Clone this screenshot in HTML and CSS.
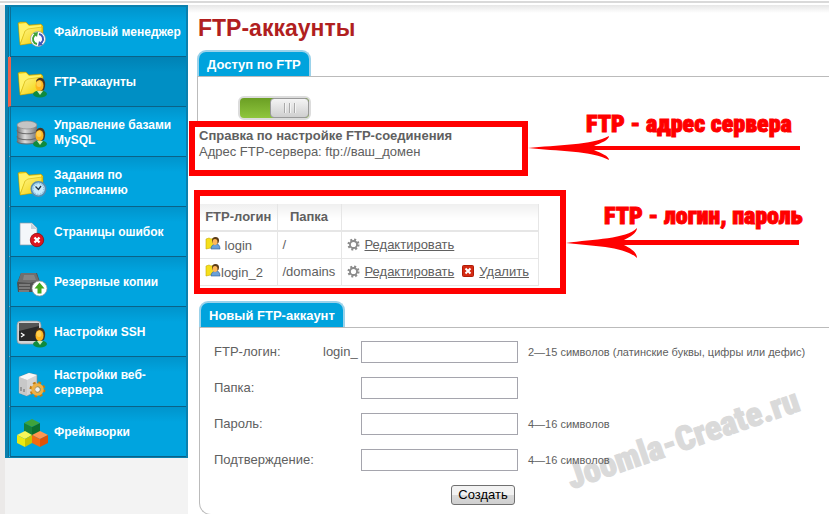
FILE: index.html
```html
<!DOCTYPE html>
<html lang="ru">

<head>
  <meta charset="utf-8">
  <title>FTP-аккаунты</title>
  <link rel="stylesheet" href="styles.css">
</head>

<body>
  <!-- shared icon parts -->
  <svg class="sprite" aria-hidden="true">
    <defs>
      <linearGradient id="yellow" x1="0" y1="0" x2="1" y2="1">
        <stop offset="0" stop-color="#fff58a" />
        <stop offset="1" stop-color="#f2cf00" />
      </linearGradient>
      <linearGradient id="metal" x1="0" y1="0" x2="1" y2="0">
        <stop offset="0" stop-color="#6f6f6f" />
        <stop offset=".4" stop-color="#dcdcdc" />
        <stop offset="1" stop-color="#777" />
      </linearGradient>
      <symbol id="folder" viewBox="0 0 32 32">
        <path d="M2 6l2-1 6 0 3 3 12-1 2 2v15L4 28z" fill="#f0d21a" stroke="#a98a00" stroke-width=".5" />
        <path d="M3 7l7-1 3 3 12-1v5L9 14 4 26z" fill="#fff36a" />
        <path d="M9 14l3-2 14-2-1 15L4 28z" fill="url(#yellow)" stroke="#c9a800" stroke-width=".5" />
      </symbol>
      <symbol id="user" viewBox="0 0 32 32">
        <ellipse cx="24" cy="27" rx="7" ry="3.500" fill="#0e8a3e" />
        <path d="M21 24l3 4 3-4z" fill="#c8ecc0" />
        <path d="M20 14c2-4 6-4 8-1 2 3 1 7 0 10l-4 1z" fill="#4a3420" />
        <ellipse cx="23.500" cy="18.500" rx="4" ry="5.500" fill="#ffb51e" />
        <ellipse cx="23" cy="17" rx="2.500" ry="3" fill="#ffcf50" />
      </symbol>
      <symbol id="smalluser" viewBox="0 0 16 16">
        <path d="M1 3l3-1 2 1 4-1v9l-9 2z" fill="#f5df1c" stroke="#c7a900" stroke-width=".6" />
        <path d="M6 13c0-3 2-5 5-5s4 2 4 5z" fill="#6aa0d8" stroke="#2e5c94" stroke-width=".6" />
        <circle cx="10.500" cy="4.500" r="3.500" fill="#5a3b18" />
        <ellipse cx="10" cy="6" rx="2.500" ry="3" fill="#ffb85a" />
      </symbol>
      <symbol id="gear" viewBox="0 0 14 14">
        <circle cx="7" cy="7" r="5" fill="none" stroke="#8c8c8c" stroke-width="3" stroke-dasharray="2 1.93" />
        <circle cx="7" cy="7" r="3.8" fill="none" stroke="#8c8c8c" stroke-width="2" />
      </symbol>
      <symbol id="remove" viewBox="0 0 12 12">
        <rect x=".5" y=".5" width="11" height="11" rx="1" fill="#d42a12" stroke="#b01c08" />
        <path d="M3.5 3.5l5 5m0-5l-5 5" stroke="#fff" stroke-width="2" />
      </symbol>
    </defs>
  </svg>

  <div class="topbar"></div>

  <div class="page">
    <aside class="sidebar">
      <nav>
        <ul class="menu">
          <li><a href="#">
            <svg viewBox="0 0 32 32"><use href="#folder" /><circle cx="22" cy="22" r="7.5" fill="#fff" stroke="#999" stroke-width=".7" /><path d="M21 27a5 5 0 0 1-3-8l2-2" fill="none" stroke="#3fa33a" stroke-width="2" /><path d="M17 16l5-1-1 5z" fill="#3fa33a" /><path d="M23 17a5 5 0 0 1 3 8l-2 2" fill="none" stroke="#3f57b8" stroke-width="2" /><path d="M27 28l-5 1 1-5z" fill="#3f57b8" /></svg>
            <span>Файловый менеджер</span></a></li>
          <li class="active"><a href="#">
            <svg viewBox="0 0 32 32"><use href="#folder" /><use href="#user" /></svg>
            <span>FTP-аккаунты</span></a></li>
          <li><a href="#">
            <svg viewBox="0 0 32 32"><path d="M1 8v15c0 5 20 5 20 0V8z" fill="url(#metal)" /><path d="M1 13c0 5 20 5 20 0M1 19c0 5 20 5 20 0M1 24c0 4 20 4 20 0" fill="none" stroke="#6d6d6d" stroke-width="1.200" /><ellipse cx="11" cy="8" rx="10" ry="4" fill="#c4c4c4" stroke="#8a8a8a" stroke-width=".7" /><use href="#user" /></svg>
            <span>Управление базами MySQL</span></a></li>
          <li><a href="#">
            <svg viewBox="0 0 32 32"><use href="#folder" /><circle cx="22.500" cy="22" r="7.200" fill="#a9d8f2" stroke="#5a8db0" stroke-width="1.600" /><circle cx="22.500" cy="22" r="5.300" fill="#c9ebfb" stroke="#7fb2d2" stroke-dasharray="1 1.770" /><path d="M19.500 19.500l3 3 2.500-3.500" fill="none" stroke="#234" stroke-width="1.300" /></svg>
            <span>Задания по расписанию</span></a></li>
          <li><a href="#">
            <svg viewBox="0 0 32 32"><path d="M4 6h12l5 5v17H4z" fill="#f4f7fa" stroke="#8a9aa8" stroke-width=".7" /><path d="M15 6v6h6z" fill="#c5d2dc" /><circle cx="21" cy="23" r="6.700" fill="#dd1620" stroke="#920b10" stroke-width=".8" /><path d="M18.500 20.500l5 5m0-5l-5 5" stroke="#fff" stroke-width="2.400" /></svg>
            <span>Страницы ошибок</span></a></li>
          <li><a href="#">
            <svg viewBox="0 0 32 32"><path d="M5 6h16l3 9-1 10H2l-1-9z" fill="#505050" /><path d="M5 6h15l3 8-10 2-11-1z" fill="#6f6f6f" /><path d="M8 8h10l2 5H7z" fill="#858585" /><path d="M3 18h11M3 21h11M3 24h10" stroke="#a5a5a5" stroke-width="1.200" /><circle cx="23.500" cy="21.500" r="7.500" fill="#fff" stroke="#999" stroke-width=".7" /><path d="M23.500 15.500l5 6h-3v5h-4v-5h-3z" fill="#43a820" /></svg>
            <span>Резервные копии</span></a></li>
          <li><a href="#">
            <svg viewBox="0 0 32 32"><rect x="1" y="4" width="24" height="23" rx="4" fill="#d2d4d6" stroke="#8e9499" stroke-width=".7" /><rect x="3" y="6" width="20" height="18" rx="1" fill="#292929" /><path d="M3 14L23 9V6H3z" fill="#555" /><path d="M5 16l3 2-3 2" fill="none" stroke="#fff" stroke-width="1.300" /><use href="#user" /></svg>
            <span>Настройки SSH</span></a></li>
          <li><a href="#">
            <svg viewBox="0 0 32 32"><path d="M3 10l10-4 8 2v16l-10 5-8-3z" fill="#d4d4d4" stroke="#888" stroke-width=".6" /><path d="M3 10l8 3 10-5-8-2z" fill="#f7f7f7" /><path d="M3 10l8 3v16l-8-3z" fill="#c8c8c8" /><path d="M5 20v4M8 22v3" stroke="#666" /><circle cx="21.500" cy="22.500" r="6.500" fill="none" stroke="#c07b14" stroke-width="3" stroke-dasharray="2.600 2.500" /><circle cx="21.500" cy="22.500" r="4.600" fill="none" stroke="#efb044" stroke-width="3.200" /><circle cx="21.500" cy="22.500" r="2.700" fill="#e9f1f5" stroke="#b87614" stroke-width=".7" /></svg>
            <span>Настройки веб-сервера</span></a></li>
          <li><a href="#">
            <svg viewBox="0 0 32 32"><path d="M16 2l8 4-8 4-8-4z" fill="#3ea33c" /><path d="M8 6l8 4v9l-8-4z" fill="#15803a" /><path d="M24 6l-8 4v9l8-4z" fill="#0c6f2e" /><path d="M9 14l7 4-7 4-8-4z" fill="#f6f65a" /><path d="M1 18l8 4v8l-8-4z" fill="#ecea12" /><path d="M16 18l-7 4v8l7-4z" fill="#c8c400" /><path d="M24 14l8 4-8 4-8-4z" fill="#ff9650" /><path d="M16 18l8 4v8l-8-4z" fill="#f26a10" /><path d="M32 18l-8 4v8l8-4z" fill="#dc5208" /></svg>
            <span>Фреймворки</span></a></li>
        </ul>
      </nav>
    </aside>

    <main>
      <h1>FTP-аккаунты</h1>

      <section>
        <h2 class="tab">Доступ по FTP</h2>
        <div class="panel access">
          <button class="switch" type="button" aria-label="Доступ по FTP"><span class="knob"></span></button>
        </div>
      </section>

      <div class="frame help">
        <p><strong>Справка по настройке FTP-соединения</strong></p>
        <p>Адрес FTP-сервера: ftp://ваш_домен</p>
        <div class="note server-note">
          <b>FTP - адрес сервера</b>
          <svg viewBox="0 0 272 24"><path d="M0 12C28 9 65 9 81 0c0 4-8 7-15 10h206v4H66c7 3 15 6 15 10C65 15 28 15 0 12z" fill="#f00" /></svg>
        </div>
      </div>

      <div class="frame accounts">
        <table>
          <thead>
            <tr>
              <th>FTP-логин</th>
              <th>Папка</th>
              <th></th>
            </tr>
          </thead>
          <tbody>
            <tr>
              <td><svg class="person"><use href="#smalluser" /></svg> login</td>
              <td>/</td>
              <td><svg class="gear"><use href="#gear" /></svg><a href="#">Редактировать</a></td>
            </tr>
            <tr>
              <td><svg class="person"><use href="#smalluser" /></svg>login_2</td>
              <td>/domains</td>
              <td><svg class="gear"><use href="#gear" /></svg><a href="#">Редактировать</a><svg class="remove"><use href="#remove" /></svg><a href="#">Удалить</a></td>
            </tr>
          </tbody>
        </table>
        <div class="note login-note">
          <b>FTP - логин, пароль</b>
          <svg viewBox="0 0 233 30"><path d="M0 15C28 11 60 11 71 0c0 5-7 9-13 12h175v5H58c6 3 13 7 13 13C60 19 28 18 0 15z" fill="#f00" /></svg>
        </div>
      </div>

      <section class="new-account">
        <h2 class="tab">Новый FTP-аккаунт</h2>
        <form class="panel">
          <div class="row">
            <label for="login">FTP-логин:</label>
            <span class="prefix">login_</span>
            <input type="text" id="login">
            <small>2—15 символов (латинские буквы, цифры или дефис)</small>
          </div>
          <div class="row">
            <label for="folderName">Папка:</label>
            <span class="prefix"></span>
            <input type="text" id="folderName">
          </div>
          <div class="row">
            <label for="password">Пароль:</label>
            <span class="prefix"></span>
            <input type="password" id="password">
            <small>4—16 символов</small>
          </div>
          <div class="row">
            <label for="confirm">Подтверждение:</label>
            <span class="prefix"></span>
            <input type="password" id="confirm">
            <small>4—16 символов</small>
          </div>
          <button class="create" type="button">Создать</button>
        </form>
        <div class="watermark">Joomla-Create.ru</div>
      </section>
    </main>
  </div>
</body>

</html>
```
FILE: styles.css
```css
* {
  box-sizing: border-box;
}

body {
  margin: 0;
  min-height: 100vh;
  display: flex;
  flex-direction: column;
  overflow: hidden;
  background: #fff;
  color: #606060;
  font: 13px/16px "Liberation Sans", Arial, sans-serif;
}

.sprite {
  position: absolute;
  width: 0;
  height: 0;
}

.topbar {
  height: 5px;
  background: linear-gradient(#fff 1px, #d9d9d9 1px, #d9d9d9 3px, #fff 3px);
}

.page {
  flex: 1;
  display: flex;
  border-left: 5px solid #ebe9e8;
}

/* left menu */
.sidebar {
  flex: 0 0 183px;
  background: #f3f3f3;
}

.menu {
  list-style: none;
  margin: 0;
  padding: 0;
  border: solid #0a80ae;
  border-width: 2px 2px 1px 3px;
}

.menu a {
  display: flex;
  align-items: center;
  gap: 6px;
  height: 50px;
  padding: 2px 0 0 5px;
  border-left: 3px double #0b6f96;
  border-bottom: 1px solid #0a6288;
  background: linear-gradient(#0094cc, #00a4df 15px);
  color: #fff;
  font-size: 12px;
  font-weight: bold;
  line-height: 15px;
  text-decoration: none;
}

.menu .active a {
  border-left: 3px solid #f0614a;
  background: linear-gradient(#0082b5, #008fc4 15px);
}

.menu svg {
  flex: 0 0 32px;
  height: 32px;
}

.menu li:first-child a {
  white-space: nowrap;
}

/* content */
main {
  flex: 1;
  min-width: 0;
  padding-left: 9px;
  background: linear-gradient(#e6e6e6, #fff 8px);
}

h1 {
  margin: 0;
  padding: 9px 0 8px 1px;
  color: #b11f1f;
  font-size: 23px;
  line-height: 28px;
}

.tab {
  display: table;
  margin: 0;
  padding: 4px 8px 3px;
  border: 2px solid #9bd2ea;
  border-bottom: 0;
  border-radius: 9px 9px 0 0;
  background: #00a3dd;
  color: #fff;
  font-size: 13px;
  line-height: 17px;
}

.panel {
  border: 1px solid #bbb;
  border-right: 0;
}

.access {
  height: 45px;
  padding: 19px 0 0 40px;
  border-bottom: 0;
}

.switch {
  display: flex;
  justify-content: flex-end;
  width: 73px;
  height: 24px;
  padding: 0;
  border: 2px solid #dcdcdc;
  border-radius: 6px;
  background: linear-gradient(#6b9f24, #8fc63d);
}

.knob {
  width: 39px;
  height: 20px;
  border: 1px solid #999;
  border-radius: 4px;
  background:
    repeating-linear-gradient(90deg, #aaa 0 1px, #f4f4f4 1px 2px, transparent 2px 5px) 13px 4px / 12px 10px no-repeat,
    linear-gradient(#f4f4f4, #cfcfcf);
}

/* red frames with their notes */
.frame {
  position: relative;
  border: 6px solid #f00;
}

.frame p {
  margin: 0;
}

.help {
  width: 339px;
  height: 55px;
  margin-left: -8px;
  padding: 1px 0 0 4px;
}

.accounts {
  width: 372px;
  height: 104px;
  margin: 14px 0 0 -3px;
  padding-top: 8px;
}

.note {
  position: absolute;
  left: 100%;
  display: flex;
  flex-direction: column;
  margin-left: 6px;
  color: #f00;
  white-space: nowrap;
}

.note b {
  font: 900 24px/24px Impact, "Roboto Condensed", "Liberation Sans Narrow", "Liberation Sans", sans-serif;
  -webkit-text-stroke: 1px #f00;
}

.server-note {
  top: -15px;
  width: 272px;
}

.server-note b {
  padding-left: 58px;
}

.login-note {
  top: 8px;
  width: 233px;
}

.login-note b {
  padding-left: 38px;
}

table {
  border-collapse: collapse;
  table-layout: fixed;
  width: 339px;
}

th,
td {
  height: 27px;
  padding: 0 5px;
  border: 1px solid #e6e6e6;
  text-align: left;
  white-space: nowrap;
}

th {
  border-top: 0;
  border-bottom: 2px solid #e6e6e6;
  background: linear-gradient(#efefef, #fff 16px);
  text-align: center;
}

th:first-child,
td:first-child {
  width: 77px;
  border-left: 0;
}

th:nth-child(2),
td:nth-child(2) {
  width: 64px;
}

td a {
  color: #606060;
}

.person {
  width: 16px;
  height: 16px;
  vertical-align: -2px;
}

.gear {
  width: 13px;
  height: 13px;
  margin-right: 5px;
  vertical-align: -2px;
}

.remove {
  width: 12px;
  height: 12px;
  margin: 0 5px 0 8px;
  vertical-align: -1px;
}

/* new account form */
.new-account {
  position: relative;
  isolation: isolate;
  margin: 7px 0 0 2px;
}

form.panel {
  padding: 13px 0 9px 14px;
  border-radius: 0 0 0 12px;
}

.row {
  display: flex;
  align-items: center;
  height: 22px;
  margin-bottom: 14px;
}

.row label {
  width: 109px;
}

.prefix {
  width: 38px;
}

.row input {
  width: 157px;
  height: 22px;
  border: 1px solid #a5a5ad;
  background: #fff;
}

.row small {
  margin-left: 10px;
  font-size: 11px;
}

.create {
  display: block;
  width: 64px;
  height: 20px;
  margin-left: 237px;
  padding: 0;
  border: 1px solid #707070;
  border-radius: 3px;
  background: linear-gradient(#f2f2f2 50%, #dadada 50%, #cfcfcf);
  color: #000;
  font: 13px/16px "Liberation Sans", Arial, sans-serif;
}

.watermark {
  position: absolute;
  z-index: -1;
  left: 375px;
  bottom: 18px;
  color: #dadada;
  font: 900 34px/40px Impact, "Roboto Condensed", "Liberation Sans Narrow", "Liberation Sans", sans-serif;
  -webkit-text-stroke: 1px #dadada;
  transform: rotate(-19deg);
  transform-origin: 0 100%;
}
```
